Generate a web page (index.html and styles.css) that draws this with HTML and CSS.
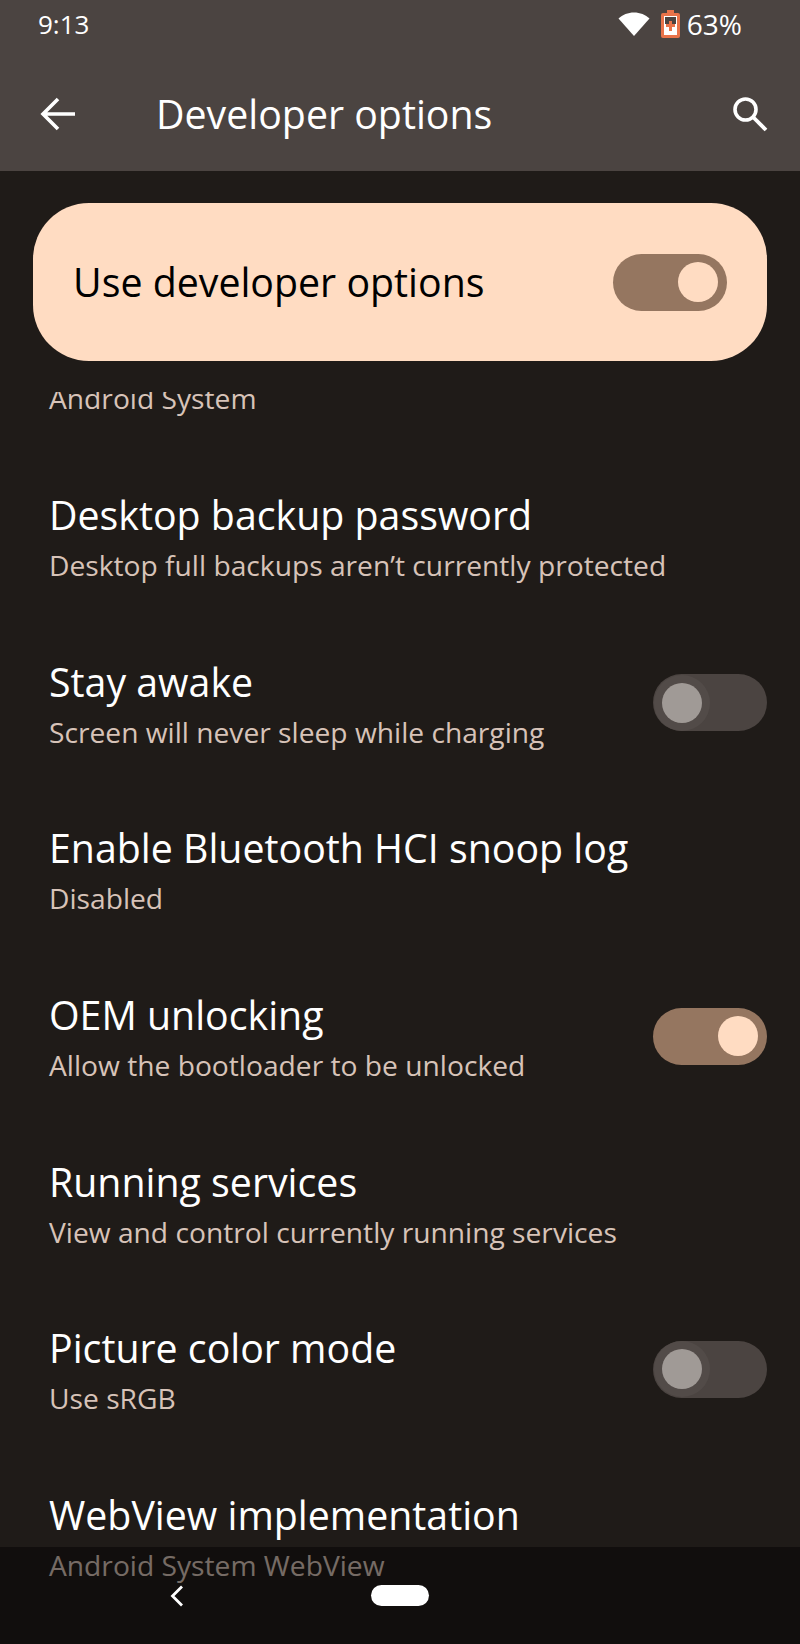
FILE: index.html
```html
<!DOCTYPE html>
<html lang="en">
<head>
  <meta charset="UTF-8">
  <meta name="viewport" content="width=device-width, initial-scale=1">
  <title>Developer options</title>
  <link rel="stylesheet" href="styles.css">
</head>

<body>
  <div class="screen">

    <!-- Status bar + app bar -->
    <div class="top-bar">
      <div class="status-bar">
        <span class="clock">9:13</span>
        <div class="status-icons">
          <svg class="wifi" width="32" height="24" viewBox="0 0 32 24"><path d="M16 24 0.5 6.500C4.500 2.600 10 .4 16 .4s11.500 2.200 15.500 6.100z" fill="#fff"/></svg>
          <svg class="battery" width="19" height="28" viewBox="0 0 19 28">
            <path d="M6 0h7v3h4a2 2 0 0 1 2 2v21a2 2 0 0 1-2 2H2a2 2 0 0 1-2-2V5a2 2 0 0 1 2-2h4z" fill="#e8734a"/>
            <rect x="3" y="6" width="13" height="19" fill="#fff"/>
            <rect x="4" y="7" width="11" height="7" fill="#4b4441"/>
            <path d="M8 11h3v3h3v3h-3v4H8v-4H5v-3h3z" fill="#e8734a"/>
          </svg>
          <span class="battery-level">63%</span>
        </div>
      </div>
      <div class="app-bar">
        <svg class="back" width="36" height="34" viewBox="0 0 36 34"><path d="M35 17H4M18 2 3 17l15 15" fill="none" stroke="#fff" stroke-width="3.600"/></svg>
        <h1 class="page-title">Developer options</h1>
        <svg class="search" width="36" height="36" viewBox="0 0 36 36"><circle cx="13.500" cy="13.500" r="10.500" fill="none" stroke="#fff" stroke-width="3.600"/><path d="M21 21 34 34" fill="none" stroke="#fff" stroke-width="3.800"/></svg>
      </div>
    </div>

    <!-- Master switch -->
    <div class="main-switch">
      <span>Use developer options</span>
      <div class="toggle on"><div class="thumb"></div></div>
    </div>

    <!-- Settings list -->
    <div class="list">
      <div class="row cut-off">
        <div class="row-text">
          <div class="row-title">Bug report handler</div>
          <div class="row-sub">Android System</div>
        </div>
      </div>

      <div class="row">
        <div class="row-text">
          <div class="row-title">Desktop backup password</div>
          <div class="row-sub">Desktop full backups aren’t currently protected</div>
        </div>
      </div>

      <div class="row">
        <div class="row-text">
          <div class="row-title">Stay awake</div>
          <div class="row-sub">Screen will never sleep while charging</div>
        </div>
        <div class="toggle"><div class="thumb"></div></div>
      </div>

      <div class="row">
        <div class="row-text">
          <div class="row-title">Enable Bluetooth HCI snoop log</div>
          <div class="row-sub">Disabled</div>
        </div>
      </div>

      <div class="row">
        <div class="row-text">
          <div class="row-title">OEM unlocking</div>
          <div class="row-sub">Allow the bootloader to be unlocked</div>
        </div>
        <div class="toggle on"><div class="thumb"></div></div>
      </div>

      <div class="row">
        <div class="row-text">
          <div class="row-title">Running services</div>
          <div class="row-sub">View and control currently running services</div>
        </div>
      </div>

      <div class="row">
        <div class="row-text">
          <div class="row-title">Picture color mode</div>
          <div class="row-sub">Use sRGB</div>
        </div>
        <div class="toggle"><div class="thumb"></div></div>
      </div>

      <div class="row">
        <div class="row-text">
          <div class="row-title">WebView implementation</div>
          <div class="row-sub">Android System WebView</div>
        </div>
      </div>
    </div>

    <!-- Navigation bar, sits over the list -->
    <div class="nav-bar">
      <svg class="nav-back" width="14" height="22" viewBox="0 0 14 22"><path d="M12 1.500 2.500 11l9.500 9.500" fill="none" stroke="#fff" stroke-width="2.800"/></svg>
      <div class="nav-home"></div>
    </div>

  </div>
</body>
</html>
```

FILE: styles.css
```css
body {
  margin: 0;
  background: #1f1b18;
  font-family: 'Open Sans', sans-serif;
}

.screen {
  position: relative;
  width: 800px;
  height: 1644px;
  overflow: hidden;
  display: flex;
  flex-direction: column;
  background: #1f1b18;
}

/* Top bar */
.top-bar {
  height: 171px;
  flex-shrink: 0;
  background: #4b4441;
  color: #fff;
}

.status-bar {
  height: 48px;
  padding: 0 58px 0 38px;
  display: flex;
  align-items: center;
  justify-content: space-between;
  font-size: 26px;
}

.status-icons {
  display: flex;
  align-items: center;
}

.wifi {
  margin-right: 11px;
}

.battery {
  margin-right: 7px;
}

.battery-level {
  font-size: 28px;
}

.app-bar {
  height: 132px;
  padding: 0 32px 0 40px;
  display: flex;
  align-items: center;
}

.page-title {
  flex: 1;
  margin: 0 0 0 80px;
  font-size: 39.300px;
  font-weight: 400;
}

/* Master switch */
.main-switch {
  flex-shrink: 0;
  height: 158px;
  margin: 32px 33px 31px;
  padding: 0 40px;
  background: #ffdcc2;
  border-radius: 56px;
  display: flex;
  align-items: center;
  justify-content: space-between;
  color: #000;
  font-size: 39.300px;
}

/* Switches */
.toggle {
  width: 114px;
  height: 57px;
  flex-shrink: 0;
  border-radius: 29px;
  background: #4b4441;
  display: flex;
  align-items: center;
  padding: 0 9px;
  box-sizing: border-box;
}

.toggle .thumb {
  width: 40px;
  height: 40px;
  border-radius: 50%;
  background: #a09a96;
  box-shadow: 0 0 0 8px #524b48;
}

.toggle.on {
  background: #957660;
  justify-content: flex-end;
}

.toggle.on .thumb {
  background: #ffdcc2;
  box-shadow: none;
}

/* List rows */
.list {
  flex: 1;
  overflow: hidden;
}

.row {
  height: 166.700px;
  padding: 0 33px 0 49px;
  display: flex;
  align-items: center;
  justify-content: space-between;
}

.row .toggle {
  margin-bottom: 8px;
}

/* row scrolled up under the master switch */
.cut-off {
  margin-top: -102px;
}

.row-title {
  color: #fff;
  font-size: 39.300px;
  line-height: 50px;
}

.row-sub {
  color: #d7c3b8;
  font-size: 28.200px;
  line-height: 50px;
}

/* Navigation bar */
.nav-bar {
  position: absolute;
  left: 0;
  right: 0;
  bottom: 0;
  height: 97px;
  background: rgba(0, 0, 0, 0.45);
}

.nav-back {
  position: absolute;
  left: 170px;
  top: 38px;
}

.nav-home {
  position: absolute;
  left: 371px;
  top: 38px;
  width: 58px;
  height: 21px;
  border-radius: 11px;
  background: #fff;
}
```
